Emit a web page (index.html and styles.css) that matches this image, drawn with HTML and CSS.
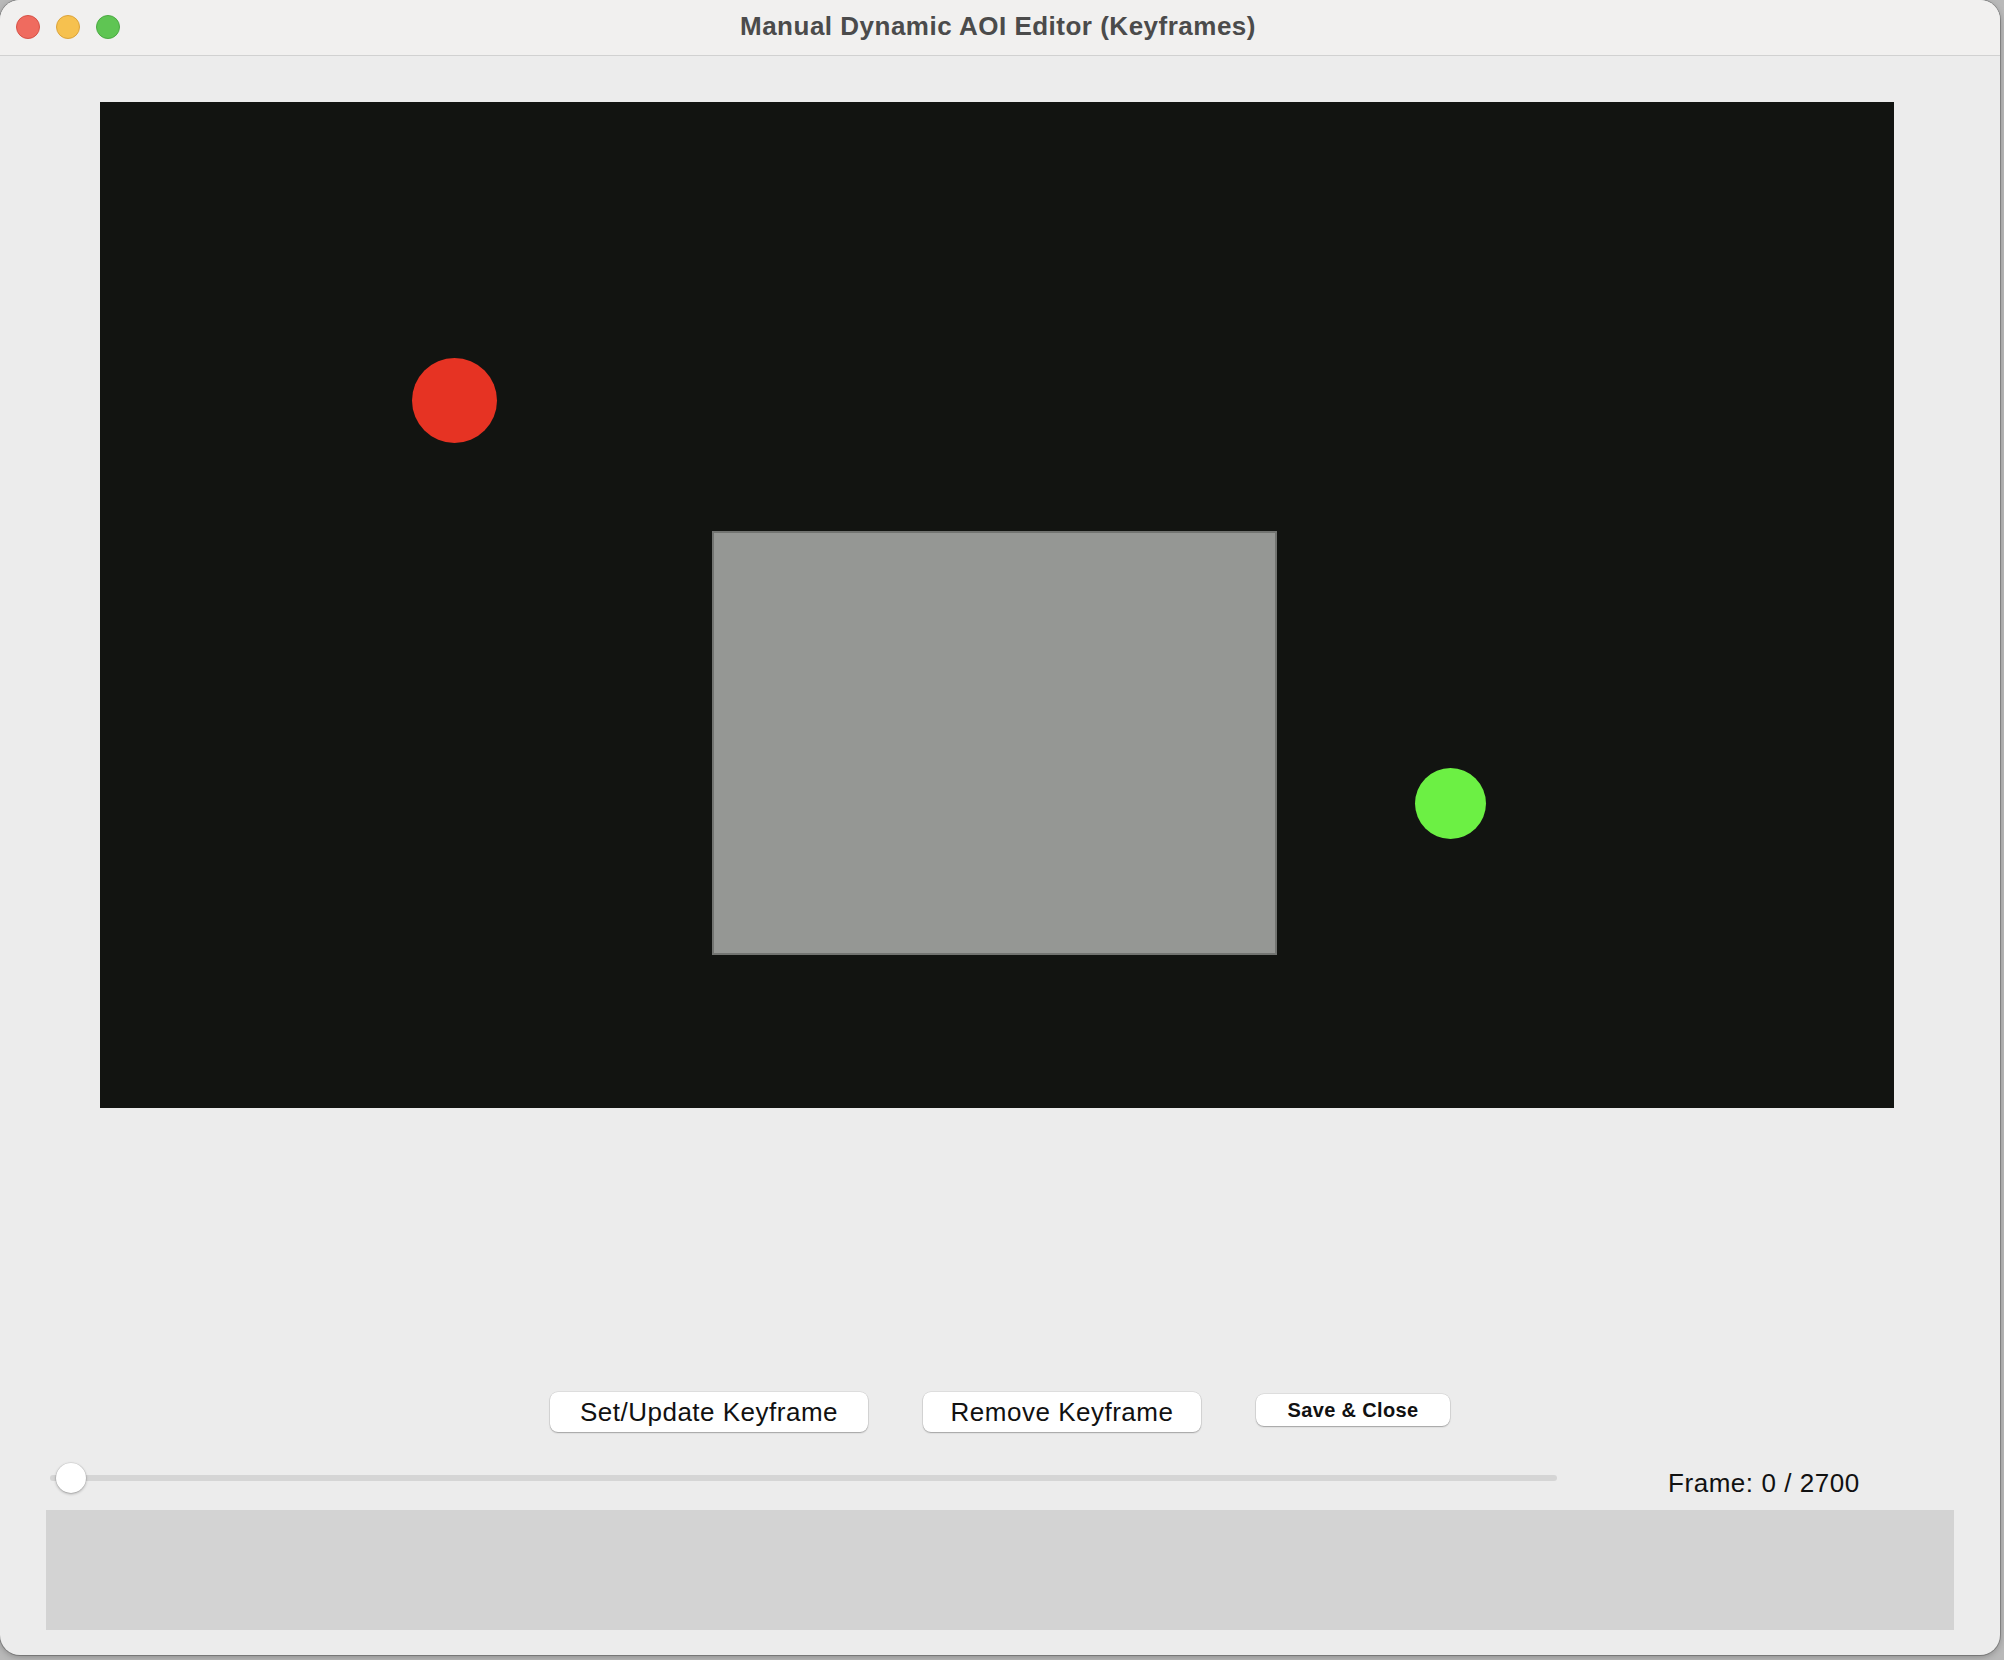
FILE: index.html
```html
<!DOCTYPE html>
<html>
<head>
<meta charset="utf-8">
<title>Manual Dynamic AOI Editor (Keyframes)</title>
<link rel="stylesheet" href="styles.css">
</head>
<body>
<div class="window">
  <div class="titlebar">
    <div class="lights">
      <span class="light close"></span>
      <span class="light min"></span>
      <span class="light max"></span>
    </div>
    <div class="title">Manual Dynamic AOI Editor (Keyframes)</div>
    <div class="titlebar-end"></div>
  </div>
  <div class="content">
    <div class="canvas">
      <div class="dot red"></div>
      <div class="box"></div>
      <div class="dot green"></div>
    </div>
    <div class="buttons">
      <button class="btn btn-wide">Set/Update Keyframe</button>
      <button class="btn btn-mid">Remove Keyframe</button>
      <button class="btn btn-small">Save &amp; Close</button>
    </div>
    <div class="slider-row">
      <div class="track">
        <div class="thumb"></div>
      </div>
      <div class="frame-label">Frame: 0 / 2700</div>
    </div>
    <div class="panel"></div>
  </div>
</div>
</body>
</html>
```

FILE: styles.css
```css
html, body {
  margin: 0;
  padding: 0;
}
body {
  width: 2004px;
  height: 1660px;
  background: #b9b9b9;
  font-family: "Liberation Sans", Arial, sans-serif;
  overflow: hidden;
}
.window {
  width: 2000px;
  height: 1655px;
  background: #ececec;
  border-radius: 20px;
  overflow: hidden;
  display: flex;
  flex-direction: column;
  box-shadow: 0 0 0 1px rgba(0,0,0,0.22), 0 2px 6px rgba(0,0,0,0.25);
}
.titlebar {
  height: 55px;
  flex: 0 0 55px;
  background: #f1f0ef;
  border-bottom: 1px solid #d1d1d1;
  display: grid;
  grid-template-columns: 1fr auto 1fr;
  align-items: center;
}
.lights {
  display: flex;
  gap: 16px;
  padding-left: 16px;
  margin-top: -1px;
}
.light {
  width: 22px;
  height: 22px;
  border-radius: 50%;
  display: block;
}
.light.close { background: #ef6b5f; border: 1px solid #d65247; }
.light.min { background: #f6c14f; border: 1px solid #dba33b; }
.light.max { background: #5fc553; border: 1px solid #4ca943; }
.title {
  font-weight: bold;
  font-size: 26px;
  letter-spacing: 0.5px;
  color: #4b4b4b;
  margin-top: -2px;
  margin-right: 4px;
}
.content {
  flex: 1;
  display: flex;
  flex-direction: column;
  padding-top: 46px;
}
.canvas {
  position: relative;
  margin-left: 100px;
  width: 1794px;
  height: 1006px;
  background: #121411;
}
.dot {
  position: absolute;
  border-radius: 50%;
}
.dot.red {
  left: 312px;
  top: 256px;
  width: 85px;
  height: 85px;
  background: #e63323;
}
.dot.green {
  left: 1315px;
  top: 666px;
  width: 71px;
  height: 71px;
  background: #6cf044;
}
.box {
  position: absolute;
  left: 612px;
  top: 429px;
  width: 561px;
  height: 420px;
  background: #959794;
  border: 2px solid #727471;
}
.buttons {
  margin-top: 284px;
  display: flex;
  justify-content: center;
  align-items: flex-start;
  gap: 55px;
  height: 40px;
}
.btn {
  background: #ffffff;
  border: none;
  border-radius: 8px;
  box-shadow: 0 1px 1.5px rgba(0,0,0,0.28), 0 0 0 0.5px rgba(0,0,0,0.12);
  font-family: "Liberation Sans", Arial, sans-serif;
  color: #111;
  padding: 0;
  margin: 0;
}
.btn-wide {
  width: 318px;
  height: 40px;
  font-size: 26px;
  letter-spacing: 0.5px;
}
.btn-mid {
  width: 278px;
  height: 40px;
  font-size: 26px;
  letter-spacing: 0.5px;
}
.btn-small {
  width: 194px;
  height: 32px;
  margin-top: 2px;
  font-size: 20px;
  font-weight: bold;
  letter-spacing: 0.35px;
}
.slider-row {
  margin-top: 33px;
  display: flex;
  align-items: flex-start;
  padding-left: 50px;
}
.track {
  position: relative;
  width: 1507px;
  height: 6px;
  margin-top: 10px;
  border-radius: 3px;
  background: #d5d5d5;
}
.thumb {
  position: absolute;
  left: 6px;
  top: -12px;
  width: 30px;
  height: 30px;
  border-radius: 50%;
  background: #ffffff;
  box-shadow: 0 1px 3px rgba(0,0,0,0.3), 0 0 0 0.5px rgba(0,0,0,0.1);
}
.frame-label {
  margin-left: 111px;
  margin-top: 3px;
  font-size: 26px;
  line-height: 30px;
  letter-spacing: 0.55px;
  color: #111;
}
.panel {
  margin: 12px 46px 0 46px;
  height: 120px;
  background: #d3d3d3;
}
```
